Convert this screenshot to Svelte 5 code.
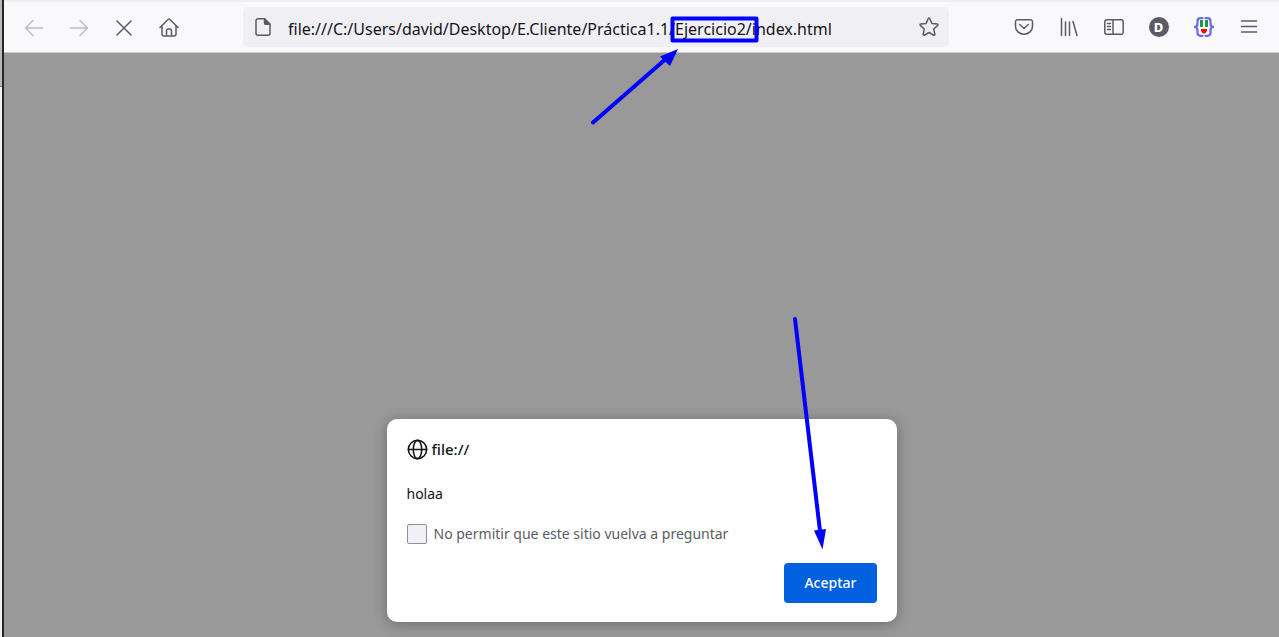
<script>
  let address = $state('file:///C:/Users/david/Desktop/E.Cliente/Práctica1.1/Ejercicio2/index.html');
  let blocked = $state(false);
</script>

<div class="window">
  <div class="edge"></div>
  <div class="browser">
    <header class="toolbar">
      <nav class="group" aria-label="Navegación">
        <button class="tool faded" aria-label="Atrás">
          <svg viewBox="0 0 20 20"><path d="M18.500 11H1.800M9 3.500 1.500 11 9 18.500" /></svg>
        </button>
        <button class="tool faded" aria-label="Adelante">
          <svg viewBox="0 0 20 20"><path d="M1.500 11h16.700M11 3.500l7.500 7.500L11 18.500" /></svg>
        </button>
        <button class="tool" aria-label="Detener">
          <svg viewBox="0 0 20 20"><path d="m3 4 14 14M17 4l-14 14" /></svg>
        </button>
        <button class="tool" aria-label="Inicio">
          <svg viewBox="0 0 20 20"><path d="m1 10.500 8.300-8.200a1 1 0 0 1 1.400 0L19 10.500M3 9v8a2 2 0 0 0 2 2h10a2 2 0 0 0 2-2V9M7.500 19v-5.500a1.500 1.500 0 0 1 1.500-1.500h2a1.500 1.500 0 0 1 1.500 1.500V19" /></svg>
        </button>
      </nav>

      <div class="urlbar">
        <svg class="page" viewBox="0 0 20 20">
          <path d="M11.500 1.700H5a2 2 0 0 0-2 2v12.600a2 2 0 0 0 2 2h10a2 2 0 0 0 2-2V7.200z" />
          <path class="fold" d="M11.500 1.700v4.500a1 1 0 0 0 1 1H17z" />
        </svg>
        <input type="text" aria-label="Dirección" spellcheck="false" bind:value={address} />
        <button class="star" aria-label="Añadir a marcadores">
          <svg viewBox="0 0 20 20"><path d="M9.300 1.500a.8.8 0 0 1 1.400 0l2.200 4.900 5.400.6a.8.8 0 0 1 .45 1.350l-4 3.650 1.100 5.400a.8.8 0 0 1-1.150.85L10 15.500l-4.700 2.750a.8.8 0 0 1-1.150-.85l1.100-5.400-4-3.650A.8.8 0 0 1 1.700 7l5.400-.6z" /></svg>
        </button>
      </div>

      <div class="group">
        <button class="tool" aria-label="Guardar en Pocket">
          <svg viewBox="0 0 20 20"><path d="M3.500 2.700h13a2 2 0 0 1 2 2v4.500a8.500 8 0 0 1-17 0V4.700a2 2 0 0 1 2-2zM5.800 7.500l4.200 4 4.200-4" /></svg>
        </button>
        <button class="tool" aria-label="Biblioteca">
          <svg viewBox="0 0 20 20"><path d="M2.500 1.500V18.500M6.500 5v13.500M10.500 5v13.500M14 4.500l4 14" /></svg>
        </button>
        <button class="tool" aria-label="Barra lateral">
          <svg viewBox="0 0 20 20"><path d="M2.800 2.800h14.400a2 2 0 0 1 2 2v10.400a2 2 0 0 1-2 2H2.800a2 2 0 0 1-2-2V4.800a2 2 0 0 1 2-2zM9 2.800v14.400M3.500 6.500h3M3.500 9.500h3M3.500 12.500h3" /></svg>
        </button>
        <button class="tool" aria-label="Cuenta"><span class="avatar">D</span></button>
        <button class="tool" aria-label="Extensión">
          <svg viewBox="0 0 20 20">
            <path class="brace" d="M8.500 1.200H6.500q-3 0-3 3v2.300Q3.500 10 .5 10q3 0 3 3.500v2.300q0 3 3 3h2M11.500 1.200h2q3 0 3 3v2.300q0 3.500 3 3.500-3 0-3 3.500v2.300q0 3-3 3h-2" />
            <path class="eyes" d="M6 3h3v7H6zM11 3h3v7h-3z" />
            <path class="mouth" d="M7 12h6v2l-2 2.500H9L7 14z" />
          </svg>
        </button>
        <button class="tool" aria-label="Menú">
          <svg viewBox="0 0 20 20"><path d="M2.500 4h15M2.500 9.500h15M2.500 15h15" /></svg>
        </button>
      </div>
    </header>

    <main>
      <div class="dialog" role="dialog" aria-labelledby="origin">
        <h1 id="origin">
          <svg viewBox="0 0 20 20"><circle cx="10" cy="10" r="8.700" /><ellipse cx="10" cy="10" rx="4" ry="8.700" /><path d="M1.300 10h17.400" /></svg>
          file://
        </h1>
        <p>holaa</p>
        <label><input type="checkbox" bind:checked={blocked} />No permitir que este sitio vuelva a preguntar</label>
        <button class="accept">Aceptar</button>
      </div>
    </main>
  </div>

  <svg class="marks" width="1279" height="637" aria-hidden="true">
    <rect x="672.500" y="18.500" width="84" height="22" />
    <path d="M593 122.500 668 57M795 319l25 212" />
    <path class="head" d="m678 49-8 17-10-9.500zM822.500 549.500 814 530.500l12-1.500z" />
  </svg>
</div>

<style>
  :global(body) { margin: 0; }
  .window {
    position: relative;
    display: flex;
    min-height: 100vh;
    overflow: hidden;
    font-family: "Segoe UI", "Noto Sans", "Open Sans", sans-serif;
    font-size: 14px;
    color: #15141a;
  }
  .edge {
    box-sizing: border-box;
    width: 4px;
    border-right: 2px solid #24251f;
    background: linear-gradient(#b9b9bd 86px, #77777a 86px, #77777a 87px, #f0f0ee 87px);
  }
  .browser { flex: 1; display: flex; flex-direction: column; min-width: 0; }
  .toolbar {
    display: flex;
    align-items: center;
    gap: 52px;
    padding: 5px 8px 5px 7px;
    border-top: 2px solid #f0f0f2;
    border-bottom: 1px solid #cccccf;
    background: #f9f9fb;
  }
  .group { display: flex; }
  button { border: 0; padding: 0; font: inherit; background: none; }
  .tool { display: grid; place-items: center; width: 45px; height: 40px; }
  svg { display: block; fill: none; stroke: #5b5b66; stroke-width: 1.500; stroke-linecap: round; stroke-linejoin: round; }
  .toolbar svg { width: 20px; height: 20px; }
  .faded svg { stroke: #bdbdc1; }
  .avatar {
    display: grid;
    place-items: center;
    width: 20px;
    height: 20px;
    border-radius: 50%;
    background: #5b5b66;
    color: #fff;
    font-size: 13px;
    font-weight: 800;
    line-height: 20px;
  }
  .tool .brace { stroke: #6a69e8; stroke-width: 2.200; }
  .tool .eyes { fill: #1c9b3d; stroke: none; }
  .tool .mouth { fill: #f00; stroke: none; }
  .urlbar {
    flex: 1;
    display: flex;
    align-items: center;
    gap: 15px;
    min-width: 0;
    height: 40px;
    padding: 0 10px;
    box-sizing: border-box;
    border-radius: 5px;
    background: #f0f0f4;
  }
  .urlbar .fold { fill: #5b5b66; }
  .urlbar input {
    flex: 1;
    min-width: 0;
    padding: 4px 0 0;
    border: 0;
    outline: 0;
    background: none;
    font: inherit;
    font-size: 16px;
    color: inherit;
  }
  main {
    flex: 1;
    display: flex;
    align-items: flex-end;
    justify-content: center;
    padding: 15px;
    background: #99999a;
  }
  .dialog {
    box-sizing: border-box;
    display: flex;
    flex-direction: column;
    width: 510px;
    padding: 20px 20px 19px;
    border-radius: 10px;
    background: #fff;
    box-shadow: 0 2px 14px rgba(0, 0, 0, 0.3);
  }
  h1 { display: flex; align-items: center; gap: 4px; margin: 0; font-size: 15px; font-weight: 500; line-height: 21px; }
  h1 svg { width: 21px; height: 21px; stroke: #15141a; }
  p { margin: 24px 0 20px; line-height: 20px; }
  label { display: flex; align-items: center; gap: 7px; line-height: 20px; color: #5b5b66; }
  label input {
    appearance: none;
    box-sizing: border-box;
    width: 20px;
    height: 20px;
    margin: 0;
    border: 1px solid #8f8f9d;
    border-radius: 2px;
    background: #f0f0f4;
  }
  label input:checked { background: #0061e0; }
  .accept {
    align-self: flex-end;
    margin-top: 19px;
    padding: 0 20px;
    border-radius: 4px;
    background: #0061e0;
    color: #fbfbfe;
    font-weight: 500;
    line-height: 40px;
  }
  .marks { position: absolute; top: 0; left: 0; pointer-events: none; stroke: #00f; stroke-width: 4; }
  .marks .head { fill: #00f; stroke: none; }
</style>
